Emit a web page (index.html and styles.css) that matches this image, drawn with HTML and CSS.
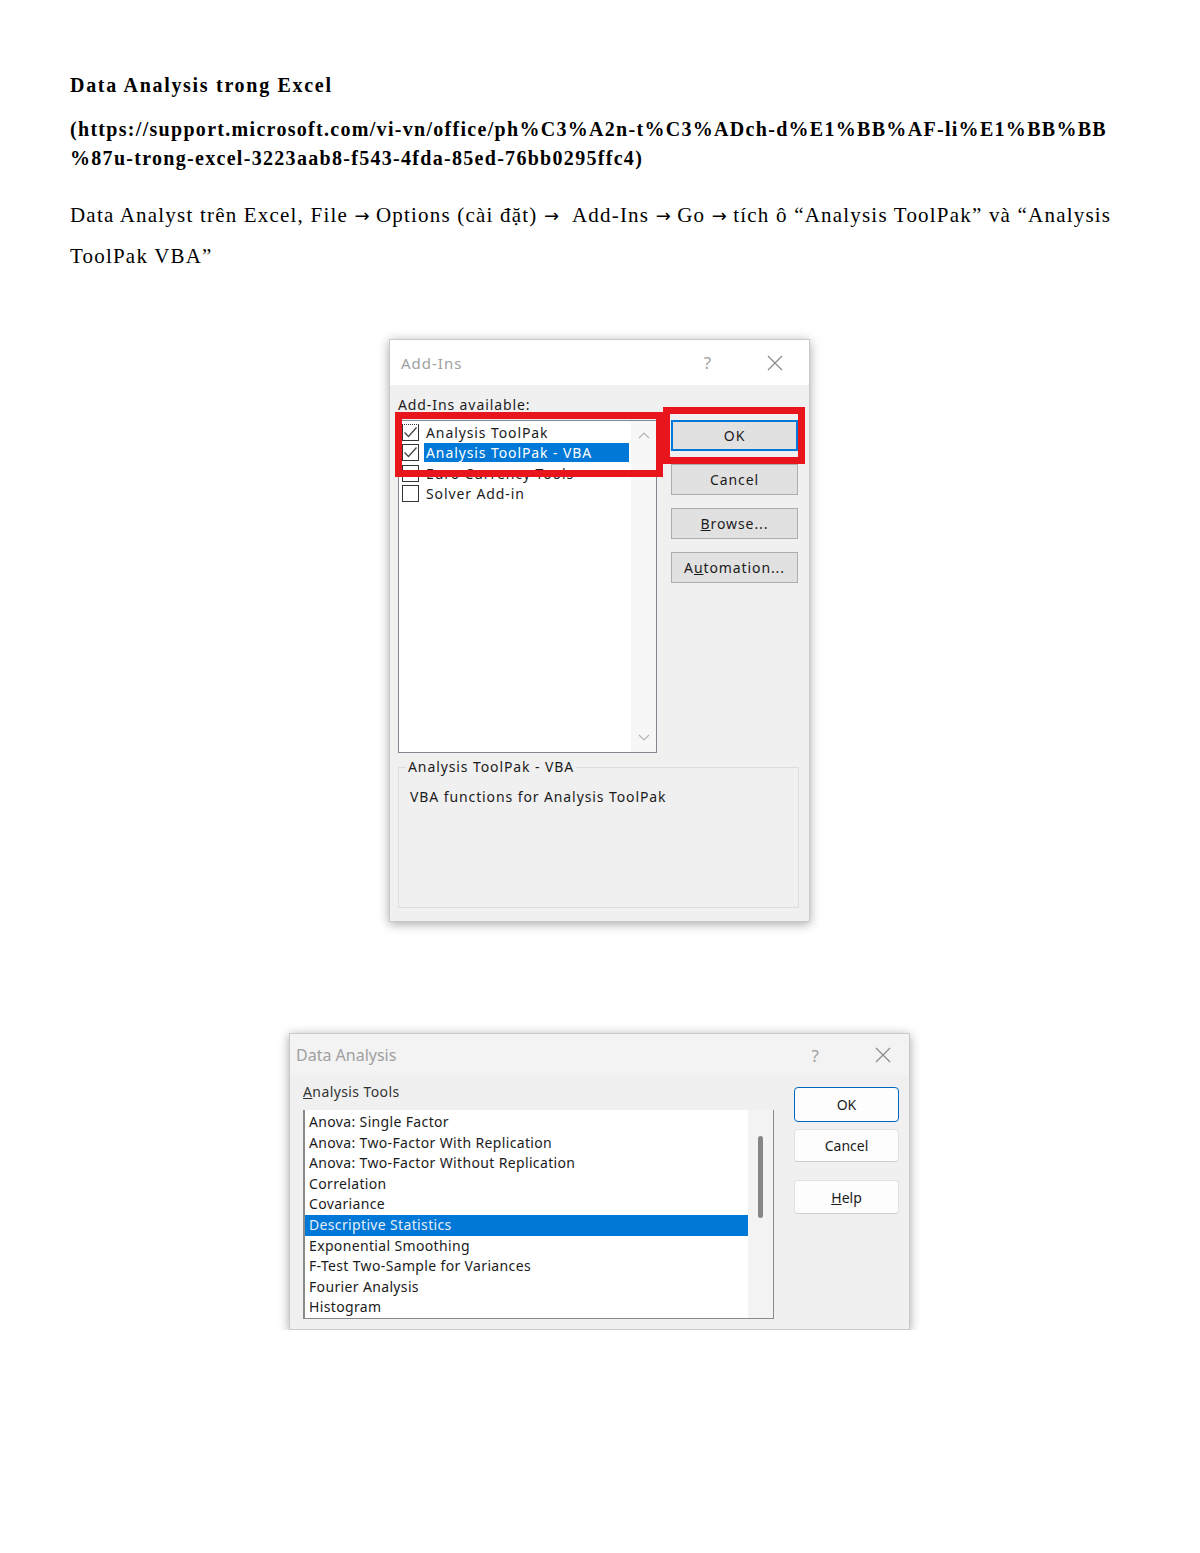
FILE: index.html
```html
<!DOCTYPE html>
<html lang="vi">
<head>
    <meta charset="UTF-8">
    <meta name="viewport" content="width=device-width, initial-scale=1.0">
    <title>Data Analysis trong Excel</title>
    <link rel="stylesheet" href="styles.css">
</head>
<body>
    <div class="doc">
        <h1>Data Analysis trong Excel</h1>
        <p class="link">(https://support.microsoft.com/vi-vn/office/ph%C3%A2n-t%C3%ADch-d%E1%BB%AF-li%E1%BB%BB<br>%87u-trong-excel-3223aab8-f543-4fda-85ed-76bb0295ffc4)</p>
        <p class="steps">Data Analyst trên Excel, File <span class="arrow">→</span> Options (cài đặt) <span class="arrow">→</span> &nbsp;Add-Ins <span class="arrow">→</span> Go <span class="arrow">→</span> tích ô “Analysis ToolPak” và “Analysis<br>ToolPak VBA”</p>

        <div class="figures">
            <!-- Add-Ins dialog -->
            <div class="dialog addins">
                <div class="titlebar">
                    <span class="title">Add-Ins</span>
                    <span class="help">?</span>
                    <svg class="close" width="16" height="16" viewBox="0 0 16 16"><path d="M1 1L15 15M15 1L1 15" stroke="#8a8a8a" stroke-width="1.2" fill="none"/></svg>
                </div>
                <div class="body">
                    <div class="label">Add-Ins available:</div>
                    <div class="main">
                        <div class="listbox">
                            <ul class="checklist">
                                <li>
                                    <span class="box focus"><svg width="17" height="17" viewBox="0 0 17 17"><path d="M2.5 8.5L6.5 12.5L14.5 3.5" stroke="#444" stroke-width="1.3" fill="none"/></svg></span>
                                    <span class="text">Analysis ToolPak</span>
                                </li>
                                <li>
                                    <span class="box"><svg width="17" height="17" viewBox="0 0 17 17"><path d="M2.5 8.5L6.5 12.5L14.5 3.5" stroke="#444" stroke-width="1.3" fill="none"/></svg></span>
                                    <span class="text selected">Analysis ToolPak - VBA</span>
                                </li>
                                <li>
                                    <span class="box"></span>
                                    <span class="text">Euro Currency Tools</span>
                                </li>
                                <li>
                                    <span class="box"></span>
                                    <span class="text">Solver Add-in</span>
                                </li>
                            </ul>
                            <div class="scrollbar">
                                <svg width="12" height="8" viewBox="0 0 12 8"><path d="M1 7L6 2L11 7" stroke="#b4b4b4" stroke-width="1.2" fill="none"/></svg>
                                <svg width="12" height="8" viewBox="0 0 12 8"><path d="M1 1L6 6L11 1" stroke="#b4b4b4" stroke-width="1.2" fill="none"/></svg>
                            </div>
                        </div>
                        <div class="buttons">
                            <button class="btn default">OK</button>
                            <button class="btn">Cancel</button>
                            <button class="btn"><u>B</u>rowse...</button>
                            <button class="btn">A<u>u</u>tomation...</button>
                        </div>
                    </div>
                    <fieldset class="details">
                        <legend>Analysis ToolPak - VBA</legend>
                        <p>VBA functions for Analysis ToolPak</p>
                    </fieldset>
                </div>
                <div class="mark mark-list"></div>
                <div class="mark mark-ok"></div>
            </div>

            <!-- Data Analysis dialog -->
            <div class="dialog analysis">
                <div class="titlebar">
                    <span class="title">Data Analysis</span>
                    <span class="help">?</span>
                    <svg class="close" width="16" height="16" viewBox="0 0 16 16"><path d="M1 1L15 15M15 1L1 15" stroke="#8a8a8a" stroke-width="1.2" fill="none"/></svg>
                </div>
                <div class="body">
                    <div class="left">
                        <div class="label"><u>A</u>nalysis Tools</div>
                        <div class="listbox">
                            <ul class="toollist">
                                <li>Anova: Single Factor</li>
                                <li>Anova: Two-Factor With Replication</li>
                                <li>Anova: Two-Factor Without Replication</li>
                                <li>Correlation</li>
                                <li>Covariance</li>
                                <li class="selected">Descriptive Statistics</li>
                                <li>Exponential Smoothing</li>
                                <li>F-Test Two-Sample for Variances</li>
                                <li>Fourier Analysis</li>
                                <li>Histogram</li>
                            </ul>
                            <div class="scrollbar">
                                <div class="thumb"></div>
                            </div>
                        </div>
                    </div>
                    <div class="buttons">
                        <button class="btn default">OK</button>
                        <button class="btn">Cancel</button>
                        <button class="btn help-btn"><u>H</u>elp</button>
                    </div>
                </div>
            </div>
        </div>
    </div>
</body>
</html>
```

FILE: styles.css
```css
body {
    margin: 0;
    background: #fff;
    color: #000;
    font-family: "Liberation Serif", "Times New Roman", serif;
}
.doc {
    padding: 71px 70px 0;
}
h1 {
    margin: 0;
    font-size: 20px;
    line-height: 29px;
    font-weight: bold;
    letter-spacing: 1.7px;
}
.link {
    margin: 15px 0 0;
    font-size: 20px;
    line-height: 29px;
    font-weight: bold;
    letter-spacing: 1.3px;
    white-space: nowrap;
}
.steps {
    margin: 22px 0 0;
    font-size: 21px;
    line-height: 41px;
    letter-spacing: 1.2px;
    white-space: nowrap;
}
.arrow {
    font-family: "DejaVu Sans", sans-serif;
    font-size: 18px;
    letter-spacing: 0;
}
.figures {
    display: flex;
    flex-direction: column;
    align-items: center;
    margin-top: 62px;
    padding-right: 1px;
    gap: 111px;
}

/* shared dialog chrome */
.dialog {
    position: relative;
    background: #f0f0f0;
    border: 1px solid #c9c9c9;
    box-shadow: 0 2px 10px rgba(0, 0, 0, 0.35);
    font-family: "Noto Sans", "Open Sans", sans-serif;
    font-size: 14px;
    color: #1b1b1b;
}
.titlebar {
    display: flex;
    align-items: center;
    color: #a0a0a0;
}
.titlebar .title {
    flex: 1;
    font-size: 15px;
}
.titlebar .help {
    font-size: 17px;
}
ul {
    list-style: none;
    margin: 0;
    padding: 0;
}
.btn {
    display: block;
    font-family: inherit;
    font-size: 14px;
    color: #1b1b1b;
    padding: 0;
    cursor: pointer;
}

/* Add-Ins */
.addins {
    width: 419px;
    letter-spacing: 0.9px;
}
.addins .btn {
    letter-spacing: 0.9px;
}
.addins .titlebar {
    height: 45px;
    background: #fff;
    padding: 0 26px 0 11px;
}
.addins .titlebar .title {
    letter-spacing: 1px;
}
.addins .titlebar .help {
    margin-right: 55px;
}
.addins .body {
    padding: 11px 11px 13px 8px;
}
.addins .label {
    line-height: 18px;
}
.addins .main {
    display: flex;
    gap: 14px;
    margin-top: 6px;
}
.addins .listbox {
    display: flex;
    width: 257px;
    height: 331px;
    border: 1px solid #828790;
    background: #fff;
}
.checklist {
    flex: 1;
    padding: 1px 2px 0 3px;
}
.checklist li {
    display: flex;
    align-items: center;
    height: 20.5px;
}
.box {
    width: 17px;
    height: 17px;
    box-sizing: border-box;
    border: 1px solid #333;
    background: #fff;
    margin-right: 5px;
    flex: none;
}
.box svg {
    display: block;
    margin: -1px 0 0 -1px;
}
.box.focus {
    border-top-style: dotted;
}
.checklist .text {
    padding: 0 2px;
    line-height: 19px;
    white-space: nowrap;
}
.checklist .selected {
    flex: 1;
    background: #0078d7;
    color: #fff;
}
.addins .scrollbar {
    width: 25px;
    background: #f7f7f7;
    display: flex;
    flex-direction: column;
    justify-content: space-between;
    align-items: center;
    padding: 10px 0 10px;
    box-sizing: border-box;
}
.addins .buttons {
    display: flex;
    flex-direction: column;
    gap: 13px;
}
.addins .btn {
    width: 127px;
    height: 31px;
    background: #e1e1e1;
    border: 1px solid #adadad;
}
.addins .btn.default {
    border: 2px solid #0078d7;
}
.details {
    margin: 5px 0 0;
    padding: 0 7px;
    height: 150px;
    box-sizing: border-box;
    border: 1px solid #dcdcdc;
    width: 401px;
}
.details legend {
    padding: 0 2px;
    line-height: 18px;
}
.details p {
    margin: 11px 0 0 4px;
    line-height: 20px;
}

/* red highlight frames */
.mark {
    position: absolute;
    border: 7px solid #e8151d;
    box-sizing: border-box;
}
.mark-list {
    left: 5px;
    top: 72px;
    width: 268px;
    height: 65px;
}
.mark-ok {
    left: 273px;
    top: 67px;
    width: 142px;
    height: 57px;
}

/* Data Analysis */
.analysis {
    width: 619px;
    background: #f0f0f0;
}
.analysis .titlebar {
    height: 42px;
    background: #f3f3f3;
    padding: 0 18px 0 6px;
}
.analysis .titlebar .title {
    font-size: 16px;
}
.analysis .titlebar .help {
    margin-right: 56px;
}
.analysis .body {
    display: flex;
    gap: 20px;
    padding: 7px 10px 10px 13px;
}
.analysis .label {
    line-height: 18px;
    color: #333;
    letter-spacing: 0.4px;
}
.analysis .listbox {
    display: flex;
    margin-top: 9px;
    width: 468px;
    height: 208px;
    border: 1px solid #8a8a8a;
    border-left-width: 2px;
    border-top: none;
    background: #fff;
}
.toollist {
    flex: 1;
    padding-top: 2px;
}
.toollist li {
    height: 20.6px;
    line-height: 20.6px;
    padding-left: 4px;
    white-space: nowrap;
    letter-spacing: 0.35px;
}
.toollist .selected {
    background: #0078d7;
    color: #e6eef8;
}
.analysis .scrollbar {
    width: 25px;
    background: #f3f3f3;
    position: relative;
}
.thumb {
    position: absolute;
    left: 10px;
    top: 26px;
    width: 5px;
    height: 82px;
    border-radius: 3px;
    background: #868686;
}
.analysis .buttons {
    display: flex;
    flex-direction: column;
    margin-top: 4px;
}
.analysis .btn {
    width: 105px;
    background: #fdfdfd;
    border: 1px solid #e2e2e2;
    border-bottom-color: #cfcfcf;
    border-radius: 4px;
}
.analysis .btn.default {
    height: 35px;
    border: 1.5px solid #0067c0;
}
.analysis .btn:nth-child(2) {
    height: 33px;
    margin-top: 7px;
}
.analysis .help-btn {
    height: 34px;
    margin-top: 18px;
}
```
